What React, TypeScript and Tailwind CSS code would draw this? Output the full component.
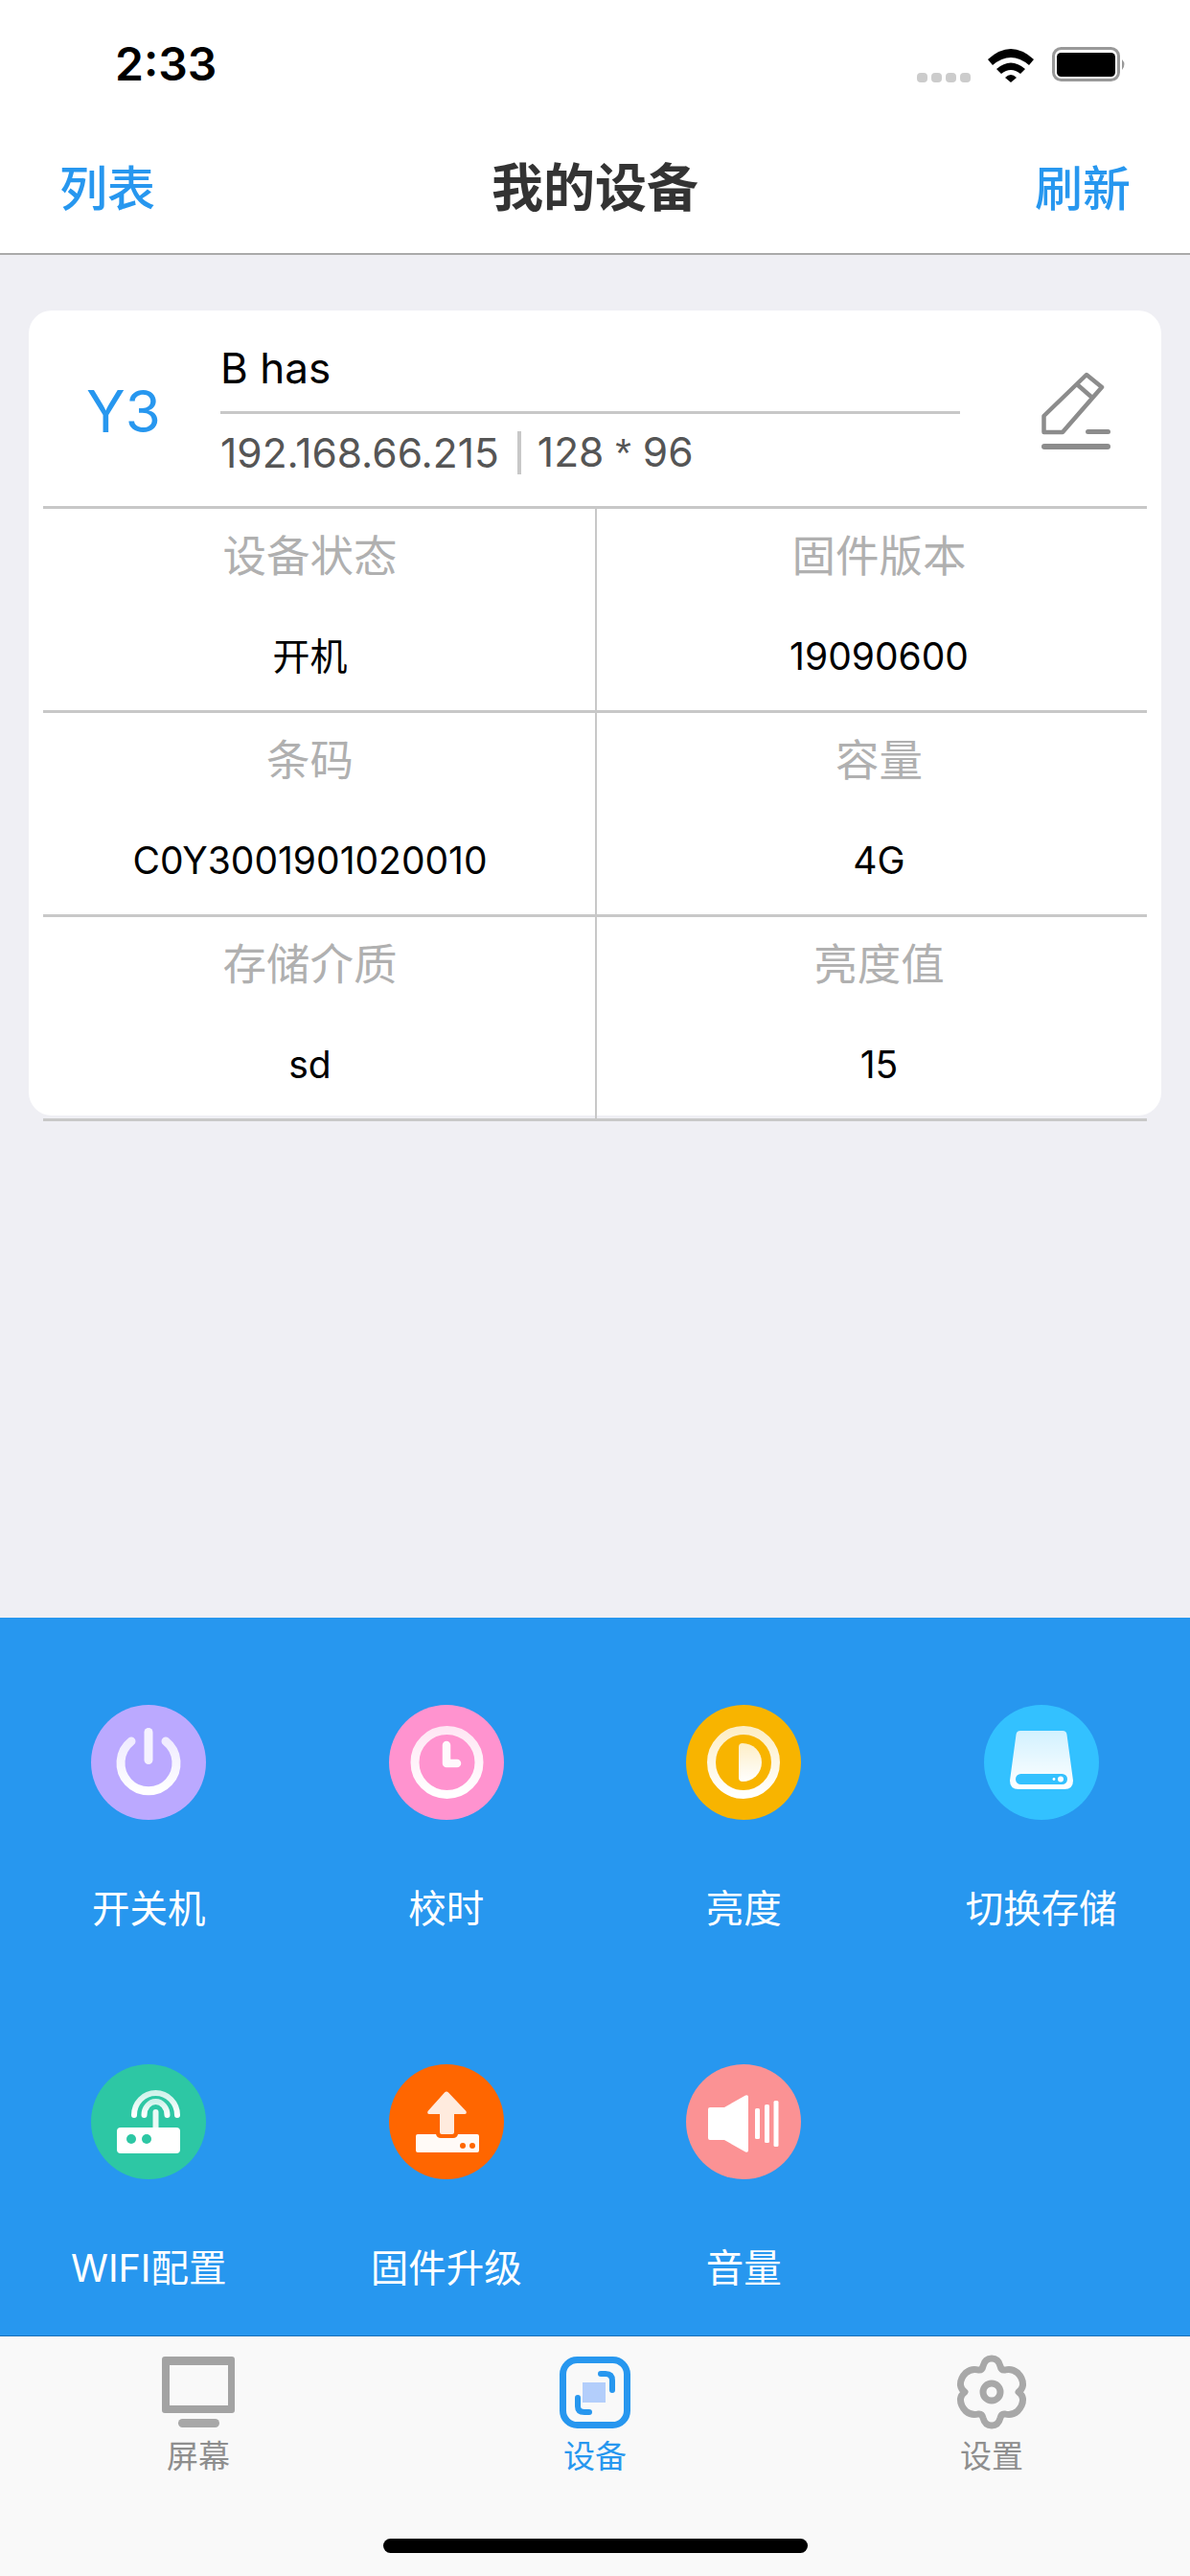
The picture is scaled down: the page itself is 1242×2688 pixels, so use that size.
import React from "react";

const BLUE = "#2797ef";

function Grad({ id }: { id: string }) {
  return (
    <defs>
      <linearGradient id={id} x1="0" y1="0" x2="0" y2="1">
        <stop offset="0" stopColor="#fff" stopOpacity="0.78" />
        <stop offset="1" stopColor="#fff" stopOpacity="1" />
      </linearGradient>
    </defs>
  );
}

function Disc({ bg, children }: { bg: string; children: React.ReactNode }) {
  return (
    <svg width="120" height="120" viewBox="0 0 120 120">
      <circle cx="60" cy="60" r="60" fill={bg} />
      {children}
    </svg>
  );
}

const icons: Record<string, React.ReactNode> = {
  power: (
    <Disc bg="#bba9ff">
      <Grad id="g1" />
      <g fill="none" stroke="url(#g1)" strokeWidth="9" strokeLinecap="round">
        <path d="M42 38 A29 29 0 1 0 78 38" />
      </g>
      <rect x="55.5" y="24" width="9" height="38" rx="4.5" fill="#fff" fillOpacity="0.85" />
    </Disc>
  ),
  clock: (
    <Disc bg="#ff93cf">
      <Grad id="g2" />
      <ellipse cx="60.5" cy="60" rx="33.5" ry="33.5" fill="none" stroke="url(#g2)" strokeWidth="9" />
      <path d="M60 42 V61 H71" fill="none" stroke="#fff" strokeOpacity="0.95" strokeWidth="8.5" strokeLinecap="round" strokeLinejoin="round" />
    </Disc>
  ),
  bright: (
    <Disc bg="#f8b400">
      <Grad id="g3" />
      <circle cx="60" cy="60" r="33.5" fill="none" stroke="url(#g3)" strokeWidth="9" />
      <path d="M55 44 Q55 40 59 40 A20 20 0 0 1 59 80 Q55 80 55 76 Z" fill="url(#g3)" />
    </Disc>
  ),
  drive: (
    <Disc bg="#33c1ff">
      <Grad id="g4" />
      <path d="M38 27 H82 Q86 27 86.5 31 L93 79 Q93 88 84 88 H36 Q27 88 27 79 L33.5 31 Q34 27 38 27 Z" fill="url(#g4)" />
      <rect x="33" y="72" width="54" height="11" rx="5.5" fill="#33c1ff" />
      <circle cx="80" cy="77.5" r="3" fill="#fff" />
      <circle cx="73" cy="77.5" r="1.4" fill="#fff" />
    </Disc>
  ),
  router: (
    <Disc bg="#2dc7a4">
      <Grad id="g5" />
      <g fill="none" stroke="url(#g5)" strokeWidth="6" strokeLinecap="round">
        <path d="M45 53 A22.5 23 0 0 1 90 53" />
        <path d="M55.5 53 A12 14 0 0 1 79.5 53" />
      </g>
      <rect x="64.5" y="47" width="6" height="22" rx="3" fill="#fff" fillOpacity="0.9" />
      <rect x="27" y="66" width="66" height="27" rx="4" fill="#fff" />
      <ellipse cx="42" cy="78" rx="5" ry="5" fill="#2dc7a4" />
      <ellipse cx="58" cy="78" rx="5" ry="5" fill="#2dc7a4" />
    </Disc>
  ),
  upload: (
    <Disc bg="#ff6600">
      <path d="M58 29.5 Q60 27.5 62 29.5 L80.5 49 Q81.5 52 79 52 H68 V71 Q68 73 66 73 H55 Q53 73 53 71 V52 H42 Q39.500 52 40.500 49 Z" fill="#fff" fillOpacity="0.87" />
      <path d="M30 73 H49 Q50 77 54 77 H67 Q71 77 72 73 H92 Q94 73 94 75 V90 Q94 92 92 92 H30 Q28 92 28 90 V75 Q28 73 30 73 Z" fill="#fff" fillOpacity="0.97" />
      <circle cx="77" cy="85" r="3" fill="#ff6600" />
      <circle cx="87" cy="85" r="3" fill="#ff6600" />
    </Disc>
  ),
  speaker: (
    <Disc bg="#fb9294">
      <path d="M25 45 H40 L62 32.500 Q65 31.500 65 34 V90 Q65 92.500 62 91.500 L40 79 H25 Q23 79 23 77 V47 Q23 45 25 45 Z" fill="#fff" />
      <rect x="72" y="46" width="5" height="32" rx="1.500" fill="#fff" />
      <rect x="82" y="42" width="5" height="40" rx="1.500" fill="#fff" />
      <rect x="91.500" y="38" width="5" height="48" rx="1.500" fill="#fff" />
    </Disc>
  ),
};

const actions = [
  { k: "power", t: "开关机" },
  { k: "clock", t: "校时" },
  { k: "bright", t: "亮度" },
  { k: "drive", t: "切换存储" },
  { k: "router", t: "WIFI配置" },
  { k: "upload", t: "固件升级" },
  { k: "speaker", t: "音量" },
];

const rows = [
  ["设备状态", "开机", "固件版本", "19090600"],
  ["条码", "C0Y3001901020010", "容量", "4G"],
  ["存储介质", "sd", "亮度值", "15"],
];

function Cell({ label, value, right }: { label: string; value: string; right?: boolean }) {
  return (
    <div
      className={
        right
          ? "flex h-[210px] flex-col items-center pl-[15px] pt-[20px]"
          : "flex h-[210px] flex-col items-center border-r-2 border-[#c8c8c8] pr-[19px] pt-[20px]"
      }
    >
      <div className="text-[45.5px] leading-[60px] text-[#b0b0b0]">{label}</div>
      <div className="mt-[50px] text-[39px] leading-[48px] text-black">{value}</div>
    </div>
  );
}

function Monitor() {
  return (
    <svg width="76" height="74" viewBox="0 0 76 74">
      <path fillRule="evenodd" d="M3 0 H73 Q76 0 76 3 V56 Q76 59 73 59 H3 Q0 59 0 56 V3 Q0 0 3 0 Z M8 9 V51 H69 V9 Z" fill="#a3a3a3" />
      <rect x="17" y="65" width="43" height="9" rx="4.500" fill="#a8a8a8" />
    </svg>
  );
}

function DeviceIcon() {
  return (
    <svg width="74" height="75" viewBox="0 0 74 75">
      <rect x="3.500" y="3.500" width="67" height="68" rx="15" fill="none" stroke={BLUE} strokeWidth="7" />
      <rect x="24" y="27" width="24" height="21" fill="#b3cefb" />
      <g fill="none" stroke={BLUE} strokeWidth="6" strokeLinecap="round">
        <path d="M43 18 H48 Q55 18 55 25 V35" />
        <path d="M19 43 V52 Q19 58 26 58 H31" />
      </g>
    </svg>
  );
}

function Gear() {
  return (
    <svg width="76" height="78" viewBox="0 0 76 78">
      <g fill="none" stroke="#a8a8a8" strokeWidth="7">
        <path
          d="M66 39 Q70 36 70.500 32 Q71 25 65 19 Q59 14 52 16 Q48 16.500 47 12 Q45 4 38 4 Q31 4 29 12 Q28 16.500 24 16 Q17 14 11 19 Q5 25 5.500 32 Q6 36 10 39 Q6 42 5.500 46 Q5 53 11 59 Q17 64 24 62 Q28 61.500 29 66 Q31 74 38 74 Q45 74 47 66 Q48 61.500 52 62 Q59 64 65 59 Q71 53 70.500 46 Q70 42 66 39 Z"
          strokeLinejoin="round"
        />
        <circle cx="38" cy="39" r="9" />
      </g>
    </svg>
  );
}

export default function App() {
  return (
    <div className="flex h-[2688px] w-[1242px] flex-col overflow-hidden bg-[#efeff4] font-['Inter','Noto_Sans_CJK_SC',sans-serif]">
      {/* status bar */}
      <div className="flex h-[130px] items-start justify-between bg-white pl-[120px] pr-[65px]">
        <div className="mt-[38px] text-[48px] font-semibold leading-[58px] text-black">2:33</div>
        <div className="mt-[49px] flex items-center">
          <svg width="56" height="36" viewBox="0 0 56 36" className="mr-[18px]">
            <g fill="#cccccc">
              <rect x="0" y="26" width="11" height="10" rx="4" />
              <rect x="15" y="26" width="11" height="10" rx="4" />
              <rect x="30" y="26" width="11" height="10" rx="4" />
              <rect x="45" y="26" width="11" height="10" rx="4" />
            </g>
          </svg>
          <svg width="48" height="36" viewBox="0 0 48 36" className="mr-[19px]">
            <path d="M0 12 Q24 -10 48 12 L43 18 Q24 2 5 18 Z" fill="#000" />
            <path d="M9 22 Q24 9 39 22 L34 27 Q24 19 14 27 Z" fill="#000" />
            <path d="M18 31 Q24 25 30 31 L24 36 Z" fill="#000" />
          </svg>
          <svg width="79" height="37" viewBox="0 0 79 37">
            <rect x="1.500" y="1.500" width="68" height="33" rx="8" fill="none" stroke="#999" strokeWidth="3" />
            <rect x="5" y="6" width="61" height="25" rx="4.500" fill="#000" />
            <path d="M73 13 Q78 18 73 24 Z" fill="#999" />
          </svg>
        </div>
      </div>

      {/* nav bar */}
      <div className="flex h-[136px] items-center justify-between border-b-2 border-[#aaaaaa] bg-white px-[62px]">
        <div className="text-[50px] font-medium leading-[60px] text-[#2797ef]">列表</div>
        <div className="text-[54px] font-semibold leading-[64px] text-[#333333]">我的设备</div>
        <div className="text-[50px] font-medium leading-[60px] text-[#2797ef]">刷新</div>
      </div>

      {/* main */}
      <div className="flex-1 px-[30px] pt-[58px]">
        <div className="h-[840px] rounded-[24px] bg-white">
          <div className="flex h-[204px]">
            <div className="w-[200px] pl-[60px] pt-[69px] text-[60px] leading-[72px] text-[#2797ef]">Y3</div>
            <div className="w-[772px]">
              <div className="h-[108px] border-b-[3px] border-[#c8c8c8] pt-[30px] text-[44px] leading-[60px] text-black">B has</div>
              <div className="mt-[18px] flex h-[45px] items-center text-[42.5px] text-[#555555]">
                <span>192.168.66.215</span>
                <span className="ml-[19px] mr-[17px] h-[45px] w-[4px] shrink-0 bg-[#c8c8c8]" />
                <span>
                  128 <span className="font-['Liberation_Sans',sans-serif]">*</span> 96
                </span>
              </div>
            </div>
            <div className="pl-[85px] pt-[64px]">
              <svg width="72" height="82" viewBox="0 0 72 82">
                <g fill="none" stroke="#8c8c8c" strokeWidth="4.500" strokeLinejoin="round">
                  <path d="M2.500 63 V46 L47 3 L63 16 L22 63 Z" />
                  <path d="M37 13 L53 27" />
                </g>
                <rect x="46" y="60" width="26" height="5" rx="2.500" fill="#8c8c8c" />
                <rect x="0" y="75" width="72" height="6" rx="3" fill="#8c8c8c" />
              </svg>
            </div>
          </div>
          <div className="mx-[15px] border-b-[3px] border-[#c8c8c8]">
            {rows.map((r) => (
              <div key={r[0]} className="grid grid-cols-[578px_1fr] border-t-[3px] border-[#c8c8c8]">
                <Cell label={r[0]} value={r[1]} />
                <Cell label={r[2]} value={r[3]} right />
              </div>
            ))}
          </div>
        </div>
      </div>

      {/* action panel */}
      <div className="grid h-[750px] grid-cols-4 content-start border-b border-[#1a6fb8] bg-[#2797ef]">
        {actions.map((a) => (
          <div key={a.k} className="flex h-[375px] flex-col items-center pt-[91px]">
            {icons[a.k]}
            <div className="mt-[68px] text-[39.5px] leading-[50px] text-white">{a.t}</div>
          </div>
        ))}
      </div>

      {/* tab bar */}
      <div className="relative h-[250px] bg-[#f9f9f9]">
        <div className="grid grid-cols-3 pt-[19px]">
          <div className="flex flex-col items-center">
            <div className="flex h-[78px] items-center"><Monitor /></div>
            <div className="mt-[3px] text-[33px] leading-[50px] text-[#8e8e8e]">屏幕</div>
          </div>
          <div className="flex flex-col items-center">
            <div className="flex h-[78px] items-center"><DeviceIcon /></div>
            <div className="mt-[3px] text-[33px] leading-[50px] text-[#2797ef]">设备</div>
          </div>
          <div className="flex flex-col items-center">
            <div className="flex h-[78px] items-center"><Gear /></div>
            <div className="mt-[3px] text-[33px] leading-[50px] text-[#8e8e8e]">设置</div>
          </div>
        </div>
        <div className="absolute bottom-[24px] left-[400px] h-[15px] w-[443px] rounded-full bg-black" />
      </div>
    </div>
  );
}
